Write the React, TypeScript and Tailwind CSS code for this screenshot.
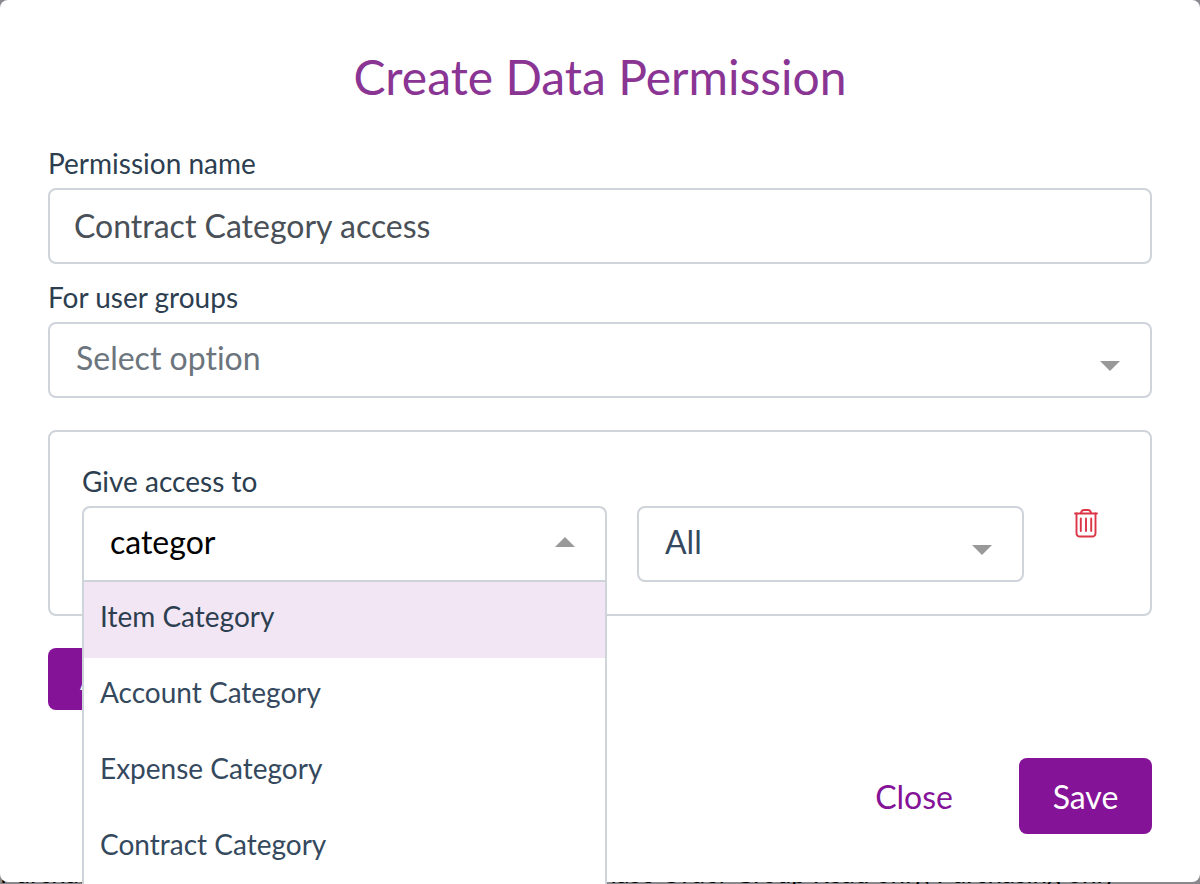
import { useState } from "react"
import type { ReactNode } from "react"

const OPTIONS = ["Item Category", "Account Category", "Expense Category", "Contract Category"]

interface ArrowProps {
  up?: boolean
}

function Arrow({ up }: ArrowProps) {
  return (
    <svg width="20" height="10" viewBox="0 0 20 10" fill="#999999" aria-hidden="true">
      <path d={up ? "M0 10 10 0l10 10z" : "M0 0h20L10 10z"} />
    </svg>
  )
}

function TrashIcon() {
  return (
    <svg
      width="24"
      height="30"
      viewBox="0 0 24 30"
      fill="none"
      stroke="#dc3545"
      strokeWidth="1.9"
      strokeLinecap="round"
      aria-hidden="true"
    >
      <path d="M1 5.5h22" />
      <path d="M7 5C7.300 3 8.500 2 10 2h4c1.500 0 2.700 1 3 3" />
      <path d="M2.500 5.500v19.500c0 2.200 1.300 3.500 3.500 3.500h12c2.200 0 3.500-1.300 3.500-3.500V5.500" />
      <path d="M6.800 10.500v12.500M12 10.500v12.500M17.200 10.500v12.500" />
    </svg>
  )
}

interface SelectProps {
  id?: string
  label?: string
  className: string
  children: ReactNode
}

function Select({ id, label, className, children }: SelectProps) {
  return (
    <div className="relative">
      <select
        id={id}
        aria-label={label}
        className={`block h-[76px] w-full appearance-none rounded-lg border-2 border-[#ced4da] bg-white pr-16 pb-1 pl-[26px] text-[32px] outline-none ${className}`}
      >
        {children}
      </select>
      <span className="pointer-events-none absolute right-8 bottom-[27px]">
        <Arrow />
      </span>
    </div>
  )
}

export default function App() {
  const [name, setName] = useState("Contract Category access")
  const [search, setSearch] = useState("categor")

  return (
    <div className="relative h-screen overflow-hidden bg-[#88888d] font-['Lato',sans-serif] text-[#2c3e50] [font-variant-ligatures:none]">
      {/* Dimmed page under the dialog */}
      <div className="absolute inset-x-0 bottom-0 flex justify-between pr-[84px] text-[26px] leading-[22px] whitespace-nowrap text-black">
        <span>Purchasing</span>
        <span>Purchase Order Group Read only, Purchasing only</span>
      </div>

      <div role="dialog" aria-labelledby="dialog-title" className="relative rounded-lg bg-white p-12">
        <h1 id="dialog-title" className="text-center text-[48px] leading-[58px] text-[#8a3494]">
          Create Data Permission
        </h1>

        <form className="mt-9" onSubmit={(e) => e.preventDefault()}>
          <label htmlFor="name" className="mb-1 block text-[28px] leading-[42px]">
            Permission name
          </label>
          <input
            id="name"
            value={name}
            onChange={(e) => setName(e.target.value)}
            className="block h-[76px] w-full rounded-lg border-2 border-[#ced4da] px-6 pb-0.5 text-[32px] text-[#495057] outline-none"
          />

          <label htmlFor="groups" className="mt-3 mb-1 block text-[28px] leading-[42px]">
            For user groups
          </label>
          <Select id="groups" className="text-[#6c757d]">
            <option>Select option</option>
          </Select>

          <div className="mt-8 grid grid-cols-[525fr_387fr_64fr] items-end gap-x-[30px] rounded-lg border-2 border-[#ced4da] px-8 pt-7 pb-8">
            <div>
              <label htmlFor="access" className="mb-1 block text-[28px] leading-[42px]">
                Give access to
              </label>
              <div className="relative z-10">
                <input
                  id="access"
                  role="combobox"
                  aria-expanded="true"
                  aria-controls="access-options"
                  value={search}
                  onChange={(e) => setSearch(e.target.value)}
                  className="block h-[76px] w-full rounded-t-lg border-2 border-[#ced4da] bg-white pr-16 pb-1.5 pl-[26px] text-[32px] text-black outline-none"
                />
                <span className="pointer-events-none absolute top-[31px] right-8">
                  <Arrow up />
                </span>
                <ul
                  id="access-options"
                  role="listbox"
                  className="absolute inset-x-0 top-full border-2 border-t-0 border-[#ced4da] bg-white"
                >
                  {OPTIONS.map((option, i) => (
                    <li
                      key={option}
                      role="option"
                      aria-selected={i === 0}
                      className={`h-[76px] px-4 pt-3.5 text-[28px] leading-10 ${i === 0 ? "bg-[#f3e6f4]" : "text-[#35495e]"}`}
                    >
                      {option}
                    </li>
                  ))}
                </ul>
              </div>
            </div>

            <Select label="Access level" className="text-[#35495e]">
              <option>All</option>
            </Select>

            <button type="button" aria-label="Delete" className="flex h-[76px] justify-center pt-0.5">
              <TrashIcon />
            </button>
          </div>

          <button type="button" className="mt-8 block h-[62px] rounded-lg bg-[#851398] px-8 text-[28px] text-white">
            Add
          </button>

          <div className="mt-12 flex justify-end gap-[34px] text-[32px]">
            <button type="button" className="h-[76px] px-8 pt-0.5 text-[#851398]">
              Close
            </button>
            <button type="submit" className="h-[76px] min-w-[133px] rounded-lg bg-[#851398] px-8 pt-0.5 text-white">
              Save
            </button>
          </div>
        </form>
      </div>
    </div>
  )
}
